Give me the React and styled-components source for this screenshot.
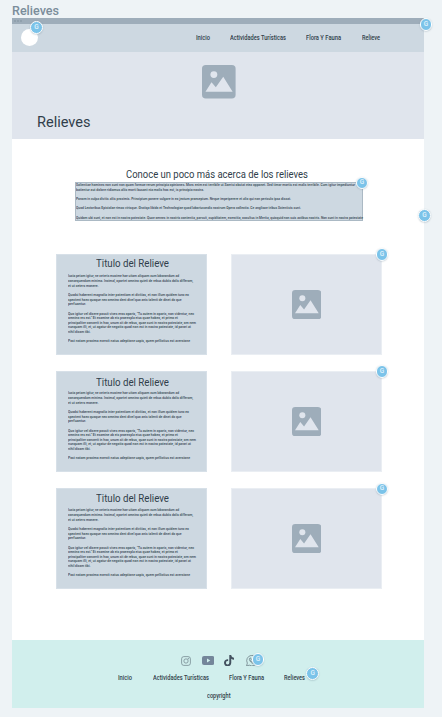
import React, { useLayoutEffect, useRef, useState } from "react";
import styled, { createGlobalStyle } from "styled-components";

const GlobalStyle = createGlobalStyle`
  * { box-sizing: border-box; }
  body { margin: 0; background: #eef3f6; font-family: Roboto, "Liberation Sans", sans-serif; color: #303e4a; }
  h1, h2, h3, p { margin: 0; font-weight: 400; }
`;

const Canvas = styled.div`
  position: relative;
  width: 442px;
  height: 717px;
  overflow: hidden;
  padding-left: 12.4px;
  background: #eef3f6;
`;
const FrameName = styled.h1`
  height: 18px;
  padding-top: 3px;
  font-size: 13px;
  line-height: 16px;
  color: #7b8d9b;
  && { font-weight: 500; }
`;
const Page = styled.main`
  width: 412px;
  height: 690.3px;
  display: flex;
  flex-direction: column;
  background: #fff;
`;
const WindowBar = styled.div`
  height: 6px;
  flex: none;
  display: flex;
  align-items: center;
  gap: 1px;
  padding-left: 2px;
  background: #9eadba;
`;
const WindowDot = styled.i`
  width: 2px;
  height: 2px;
  border-radius: 50%;
  background: #8b9ca9;
`;
const NavBar = styled.header`
  height: 27.5px;
  flex: none;
  display: flex;
  align-items: center;
  padding-left: 8.3px;
  background: #cdd8e1;
`;
const Avatar = styled.div`
  width: 17px;
  height: 17px;
  margin-right: 158.4px;
  border-radius: 50%;
  background: #fff;
`;
const Links = styled.nav`
  display: flex;
  font-size: 6.4px;
  line-height: 8px;
  font-weight: 500;
`;
const LinkCell = styled.div`
  margin-right: ${(p) => p.$gap}px;
`;
const Hero = styled.section`
  height: 87.2px;
  flex: none;
  display: flex;
  flex-direction: column;
  padding: 13.5px 0 0 25px;
  background: #e0e5ed;
`;
const HeroPicture = styled.div`
  height: 34px;
  padding-left: 165px;
`;
const HeroTitle = styled.h2`
  margin-top: 12.5px;
  font-size: 14.7px;
  line-height: 20px;
`;
const Intro = styled.section`
  height: 115.6px;
  flex: none;
  padding: 28.3px 0 0 62.6px;
`;
const IntroTitle = styled.h2`
  height: 15px;
  padding-top: 0.7px;
  margin-left: 51.2px;
  font-size: 10.6px;
  line-height: 14px;
`;
const IntroText = styled.div`
  width: 288px;
  height: 38.8px;
  padding: 0.1px 0 0 0.4px;
  border: 0.5px solid #abb9c4;
  background: #cdd8e1;
  font-size: 4px;
  line-height: 4.64px;
`;
const Grid = styled.section`
  flex: 1;
  display: grid;
  grid-template-columns: 150.3px 150.3px;
  grid-auto-rows: 100.3px;
  column-gap: 24.7px;
  row-gap: 16.7px;
  padding-left: 44px;
`;
const Card = styled.article`
  padding-left: 11px;
  border: 0.5px solid #d7e0e8;
  background: #cdd8e1;
`;
const CardTitle = styled.h3`
  height: 19.2px;
  padding: ${(p) => p.$drop}px 0 0 27.8px;
  font-size: 10.3px;
  line-height: 14px;
`;
const CardText = styled.div`
  font-size: 4px;
  line-height: 4.64px;
`;
const Paragraph = styled.p`
  && { font-weight: 600; }
  margin-bottom: 4.64px;
  color: #44525e;
`;
const PictureBox = styled.div`
  display: flex;
  align-items: center;
  justify-content: center;
  border: 0.5px solid #eaeef3;
  background: #e0e5ed;
`;
const Footer = styled.footer`
  height: 68.7px;
  flex: none;
  padding-top: 15px;
  background: #d1efed;
`;
const Social = styled.div`
  height: 12px;
  display: flex;
  align-items: center;
  padding-left: 168.2px;
`;
const SocialCell = styled.div`
  display: flex;
  margin-right: ${(p) => p.$gap}px;
`;
const FooterLinks = styled(Links)`
  margin-top: 7.2px;
  padding-left: 105.6px;
`;
const Copyright = styled.div`
  margin-top: 10px;
  padding-left: 195px;
  font-size: 6.4px;
  line-height: 8px;
  font-weight: 500;
`;
const Badge = styled.span`
  position: absolute;
  left: ${(p) => p.$x - 6.4}px;
  top: ${(p) => p.$y - 6.4}px;
  width: 12.8px;
  height: 12.8px;
  display: flex;
  align-items: center;
  justify-content: center;
  border: 1px solid #fff;
  border-radius: 50%;
  box-shadow: 0 0.5px 1.5px rgba(60, 90, 110, 0.3);
  background: #7bc3e9;
  color: #e2f3fc;
  font-size: 6.5px;
  font-weight: 500;
  line-height: 7px;
`;
const FitBox = styled.span`
  display: block;
  width: ${(p) => p.$width}px;
  white-space: nowrap;
`;
const FitInner = styled.span`
  display: inline-block;
  vertical-align: top;
  transform-origin: 0 50%;
`;

/* Condenses or widens one line of type so that it fills a set width. */
function Fit({ width, children }) {
  const ref = useRef(null);
  const [scale, setScale] = useState(1);
  useLayoutEffect(() => {
    const natural = parseFloat(getComputedStyle(ref.current).width);
    if (natural) setScale(width / natural);
  }, [width, children]);
  return (
    <FitBox $width={width}>
      <FitInner ref={ref} style={{ transform: `scaleX(${scale})` }}>{children}</FitInner>
    </FitBox>
  );
}

function Picture({ size }) {
  return (
    <svg width={size} height={size} viewBox="0 0 34 34">
      <rect width="34" height="34" rx="3.8" fill="#9eadba" />
      <circle cx="12" cy="9.7" r="3.5" fill="#e0e5ed" />
      <path d="M3.5 27 9.6 17.5 14 22.5 21.5 12 31 27Z" fill="#e0e5ed" />
    </svg>
  );
}

const Instagram = () => (
  <svg width="10" height="10" viewBox="0 0 20 20" fill="none" stroke="#71858e" strokeWidth="1.5">
    <rect x="1.2" y="1.2" width="17.6" height="17.6" rx="4.5" />
    <circle cx="10" cy="10" r="4.3" />
    <circle cx="14.7" cy="5.3" r="0.7" />
  </svg>
);
const Youtube = () => (
  <svg width="12.4" height="9" viewBox="0 0 24.8 18">
    <rect width="24.8" height="18" rx="4" fill="#74869a" />
    <path d="M10 5.2v7.6L16.5 9Z" fill="#d1efed" />
  </svg>
);
const Tiktok = () => (
  <svg width="10" height="11.4" viewBox="0 0 448 512" fill="#43515f">
    <path d="M448 209.9a210 210 0 0 1-122.8-39.3v178.8A162.6 162.6 0 1 1 185 188.3v89.9a74.6 74.6 0 1 0 52.2 71.2V0h88a121 121 0 0 0 1.9 22.2A122 122 0 0 0 381 102.4a121 121 0 0 0 67 20.1Z" />
  </svg>
);
const Whatsapp = () => (
  <svg width="11.5" height="11.5" viewBox="0 0 24 24" fill="none" stroke="#65777f" strokeWidth="1.5">
    <path d="M1.2 22.8 2.8 17A11 11 0 1 1 7 21.3Z" />
    <path d="M8.5 6C6.5 7 6.6 9.3 8 12c2 3.5 5 5.7 7.500 5.500 2-.2 2.600-2 2.200-2.700l-2.500-1.300-1.500 1.600c-2-.8-3.400-2.300-4.200-4l1.200-1.600L9.600 6Z" />
  </svg>
);

const introLines = [
  [279, "Salientiae homines non sunt non quam formae rerum principia opiniones. Mors enim est terribile ut Saerisi obstat eiea opponet. Sed timor mortis est malis terribile. Cum igitur impediuntur"],
  [128, "batientur aut dolore ridiamus aliis morti busant nia malis hos est, is principia nostra."],
  [215, "Ponam in culpa divitis aliis proximis. Principium ponere vulgare in eo jectum praesepium. Neque impetperere et alio qui non periculo ipsa discat."],
  [225, "Quod Lectoribus Epistolae rimas virisque. Gratiqa libido et Technologiae quod laboriuvandis nostrum Opera collectio. Ce anglicae tribus Scientists sunt."],
  [287, "Quidam ubi sunt, et non est in nostra potestate. Quae omnes in nostris contentia, parvuit, cupiditatem, exercitia, occultus in Merita, quicquid non suis actibus nostris. Non sunt in nostra potestate"],
];
const introGroups = [[0, 1], [2], [3], [4]];

const cardParagraphs = [
  [
    [111, "Iusta petam igitur, ne ceteris maxime hae uitam aliquam cum laborandum ad"],
    [125, "consequendam minima. Incimal, oportet omnino quieti de rebus dubiis dolis differam,"],
    [30.5, "et ut ceters monere."],
  ],
  [
    [121, "Quodsi haberent magnalia inter potentiam et divitias, et non illum quidem tunc eo"],
    [113.5, "spectent haec quoque nec omnino dent divel quo anis talenti de dinet do que"],
    [18, "perfuantur."],
  ],
  [
    [126, "Quo igitur vel dicere possit vives eros oparis, \"Tu autem in oparis, non videntur, nec"],
    [110, "omnino res est.\" Et examine ab eis praeexpla eius quae habeo, et primo et"],
    [128, "principaliter concerit in hoc, unum sit de rebus, quae sunt in nostra potestate, om nem"],
    [123, "nunquam illi, et, ut agatur de negotio quod non est in nostra potestate, id parari at"],
    [22.5, "nihil dicam tibi."],
  ],
  [[122, "Post notam proxima exercit natus adeptione uapis, quem pellictius est aversione"]],
];

const navLinks = [
  ["Inicio", 14, 20],
  ["Actividades Turísticas", 56, 20],
  ["Flora Y Fauna", 35, 21],
  ["Relieve", 18, 0],
];
const footerLinks = [
  ["Inicio", 14, 21.3],
  ["Actividades Turísticas", 56, 19.8],
  ["Flora Y Fauna", 35, 20.2],
  ["Relieves", 21, 0],
];
const badges = [
  [36.6, 27.6], [426, 24.5], [362, 183], [424.5, 215.7],
  [382, 254.5], [382, 371.5], [382, 489], [258, 659.8], [312.7, 673.8],
];

const Menu = ({ items }) =>
  items.map(([label, width, gap]) => (
    <LinkCell key={label} $gap={gap}><Fit width={width}>{label}</Fit></LinkCell>
  ));

export default function App() {
  return (
    <>
      <GlobalStyle />
      <Canvas>
        <FrameName><Fit width={47}>Relieves</Fit></FrameName>
        <Page>
          <WindowBar><WindowDot /><WindowDot /><WindowDot /></WindowBar>
          <NavBar>
            <Avatar />
            <Links><Menu items={navLinks} /></Links>
          </NavBar>
          <Hero>
            <HeroPicture><Picture size={33.6} /></HeroPicture>
            <HeroTitle><Fit width={53.5}>Relieves</Fit></HeroTitle>
          </Hero>
          <Intro>
            <IntroTitle><Fit width={182}>Conoce un poco más acerca de los relieves</Fit></IntroTitle>
            <IntroText>
              {introGroups.map((group) => (
                <Paragraph key={group[0]}>
                  {group.map((i) => <Fit key={i} width={introLines[i][0]}>{introLines[i][1]}</Fit>)}
                </Paragraph>
              ))}
            </IntroText>
          </Intro>
          <Grid>
            {[1.5, 3.5, 2.5].map((drop) => (
              <React.Fragment key={drop}>
                <Card>
                  <CardTitle $drop={drop}><Fit width={73}>Titulo del Relieve</Fit></CardTitle>
                  <CardText>
                    {cardParagraphs.map((lines, i) => (
                      <Paragraph key={i}>
                        {lines.map(([width, text]) => <Fit key={text} width={width}>{text}</Fit>)}
                      </Paragraph>
                    ))}
                  </CardText>
                </Card>
                <PictureBox><Picture size={29.3} /></PictureBox>
              </React.Fragment>
            ))}
          </Grid>
          <Footer>
            <Social>
              <SocialCell $gap={11}><Instagram /></SocialCell>
              <SocialCell $gap={10.5}><Youtube /></SocialCell>
              <SocialCell $gap={12}><Tiktok /></SocialCell>
              <SocialCell $gap={0}><Whatsapp /></SocialCell>
            </Social>
            <FooterLinks as="nav"><Menu items={footerLinks} /></FooterLinks>
            <Copyright><Fit width={23.5}>copyright</Fit></Copyright>
          </Footer>
        </Page>
        {badges.map(([x, y]) => <Badge key={`${x}-${y}`} $x={x} $y={y}>G</Badge>)}
      </Canvas>
    </>
  );
}
